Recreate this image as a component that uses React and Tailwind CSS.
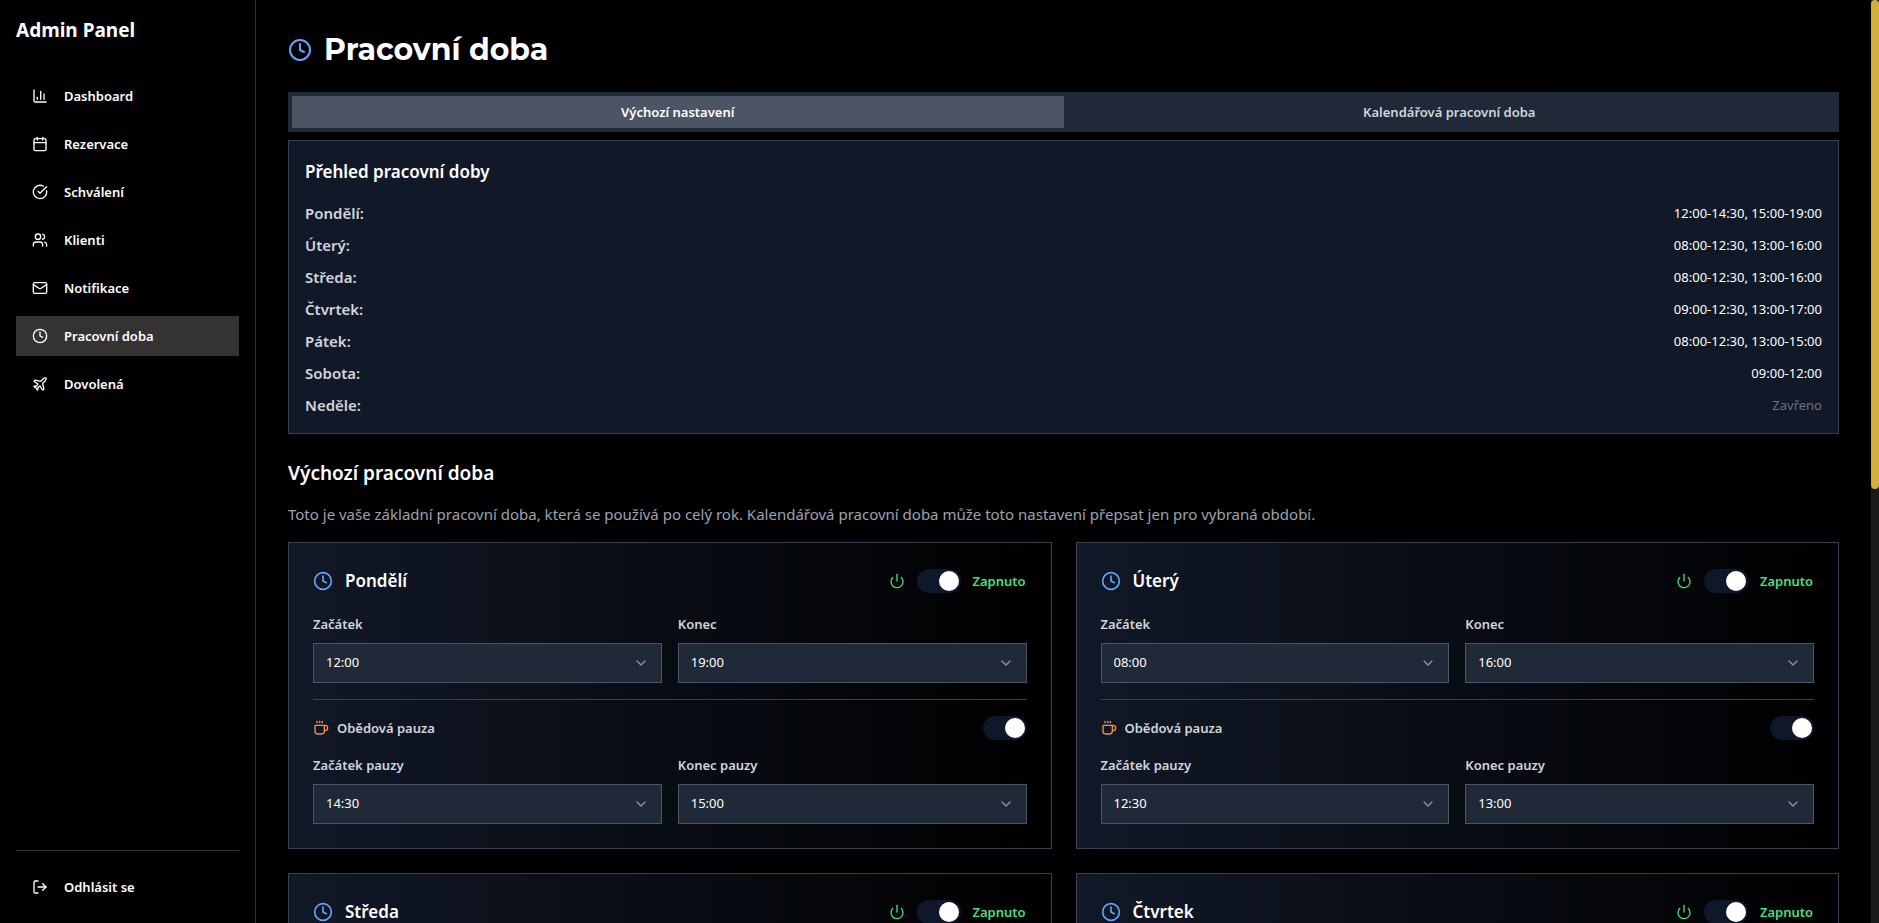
import React, { useId, useState } from 'react';
import {
  Calendar,
  ChartColumn,
  ChevronDown,
  CircleCheckBig,
  Clock,
  Coffee,
  LogOut,
  Mail,
  Plane,
  Power,
  Users,
} from 'lucide-react';

const NAV = [
  { label: 'Dashboard', icon: ChartColumn },
  { label: 'Rezervace', icon: Calendar },
  { label: 'Schválení', icon: CircleCheckBig },
  { label: 'Klienti', icon: Users },
  { label: 'Notifikace', icon: Mail },
  { label: 'Pracovní doba', icon: Clock, active: true },
  { label: 'Dovolená', icon: Plane },
];

const WEEK = [
  { day: 'Pondělí', start: '12:00', end: '19:00', pause: ['14:30', '15:00'] },
  { day: 'Úterý', start: '08:00', end: '16:00', pause: ['12:30', '13:00'] },
  { day: 'Středa', start: '08:00', end: '16:00', pause: ['12:30', '13:00'] },
  { day: 'Čtvrtek', start: '09:00', end: '17:00', pause: ['12:30', '13:00'] },
  { day: 'Pátek', start: '08:00', end: '15:00', pause: ['12:30', '13:00'] },
  { day: 'Sobota', start: '09:00', end: '12:00' },
  { day: 'Neděle' },
];

const TIMES = Array.from({ length: 48 }, (_, i) => {
  const hours = String(Math.floor(i / 2)).padStart(2, '0');
  return `${hours}:${i % 2 ? '30' : '00'}`;
});

function formatHours({ start, end, pause }) {
  if (!start) return null;
  return pause ? `${start}-${pause[0]}, ${pause[1]}-${end}` : `${start}-${end}`;
}

function Sidebar() {
  return (
    <aside className="sticky top-0 flex h-screen w-64 shrink-0 flex-col border-r border-[#333333] bg-black">
      <div className="px-4 pt-4 pb-5 text-[19px] leading-7 font-bold">Admin Panel</div>
      <nav aria-label="Administrace" className="flex flex-1 flex-col gap-2 px-4 pt-3">
        {NAV.map(({ label, icon: Icon, active }) => (
          <a
            key={label}
            href="#"
            aria-current={active ? 'page' : undefined}
            className={`flex h-10 items-center gap-4 px-4 text-[13px] leading-5 font-semibold ${active ? 'bg-[#333333]' : ''}`}
          >
            <Icon className="size-4" />
            {label}
          </a>
        ))}
      </nav>
      <div className="px-4 pb-4">
        <div className="border-t border-[#333333] pt-4">
          <button
            type="button"
            className="flex h-10 w-full items-center gap-4 px-4 text-[13px] leading-5 font-semibold"
          >
            <LogOut className="size-4" />
            Odhlásit se
          </button>
        </div>
      </div>
    </aside>
  );
}

function Toggle({ checked, onChange, label }) {
  return (
    <input
      type="checkbox"
      role="switch"
      aria-label={label}
      checked={checked}
      onChange={(e) => onChange(e.target.checked)}
      className="h-6 w-11 shrink-0 cursor-pointer appearance-none rounded-full bg-[#334155] p-0.5 before:block before:size-5 before:rounded-full before:bg-white checked:bg-[#0f172a] checked:before:translate-x-5"
    />
  );
}

function TimeSelect({ label, value }) {
  const id = useId();
  return (
    <div className="min-w-0 flex-1">
      <label htmlFor={id} className="mb-1.5 block text-[13px] leading-[26px] font-semibold text-gray-300">
        {label}
      </label>
      <div className="relative">
        <select
          id={id}
          defaultValue={value}
          className="block h-10 w-full appearance-none border border-[#4b5563] bg-[#1f2937] px-3 text-[13px] text-white"
        >
          {TIMES.map((t) => (
            <option key={t}>{t}</option>
          ))}
        </select>
        <ChevronDown className="pointer-events-none absolute top-3 right-[13px] size-4 text-[#8f949d]" />
      </div>
    </div>
  );
}

function DayCard({ day, start, end, pause }) {
  const [open, setOpen] = useState(Boolean(start));
  const [hasPause, setHasPause] = useState(Boolean(pause));
  return (
    <section className="border border-[#374151] bg-[linear-gradient(to_right,#111827,#000000)] p-6">
      <header className="flex h-7 items-center justify-between">
        <h3 className="flex items-center gap-3 text-[17px] leading-7 font-semibold">
          <Clock className="size-5 text-[#60a5fa]" />
          {day}
        </h3>
        <div className="flex items-center gap-3">
          <Power className={`size-4 ${open ? 'text-[#4ade80]' : 'text-gray-500'}`} />
          <Toggle checked={open} onChange={setOpen} label={`${day} – otevřeno`} />
          <span
            className={`min-w-[54px] text-[13px] leading-5 font-semibold ${open ? 'text-[#4ade80]' : 'text-gray-500'}`}
          >
            {open ? 'Zapnuto' : 'Vypnuto'}
          </span>
        </div>
      </header>
      {open && (
        <>
          <div className="mt-4 flex gap-4">
            <TimeSelect label="Začátek" value={start ?? '08:00'} />
            <TimeSelect label="Konec" value={end ?? '16:00'} />
          </div>
          <div className="mt-4 border-t border-[#374151] pt-4">
            <div className="flex h-6 items-center justify-between">
              <span className="flex items-center gap-2 text-[13px] leading-5 font-semibold text-gray-300">
                <Coffee className="size-4 text-[#fb923c]" />
                Obědová pauza
              </span>
              <Toggle checked={hasPause} onChange={setHasPause} label={`${day} – obědová pauza`} />
            </div>
            {hasPause && (
              <div className="mt-3 flex gap-4">
                <TimeSelect label="Začátek pauzy" value={pause?.[0] ?? '12:00'} />
                <TimeSelect label="Konec pauzy" value={pause?.[1] ?? '12:30'} />
              </div>
            )}
          </div>
        </>
      )}
    </section>
  );
}

function Overview() {
  return (
    <section className="mt-2 border border-[#374151] bg-[#111827] p-4">
      <h2 className="text-[17px] leading-[30px] font-semibold">Přehled pracovní doby</h2>
      <dl className="mt-3.5 flex flex-col gap-2">
        {WEEK.map((entry) => {
          const hours = formatHours(entry);
          return (
            <div key={entry.day} className="flex h-6 items-center justify-between">
              <dt className="text-[15px] leading-6 font-semibold text-gray-300">{entry.day}:</dt>
              <dd className={`text-[13px] leading-5 ${hours ? 'text-white' : 'text-[#6b7280]'}`}>
                {hours ?? 'Zavřeno'}
              </dd>
            </div>
          );
        })}
      </dl>
    </section>
  );
}

export default function App() {
  return (
    <div className="flex min-h-screen bg-black font-['Noto_Sans','Open_Sans',sans-serif] text-white">
      <Sidebar />
      <main className="min-w-0 flex-1 p-8">
        <h1 className="flex h-9 items-center gap-3 font-['Montserrat','Inter',sans-serif] text-[30px] leading-9 font-bold">
          <Clock className="size-6 text-[#60a5fa]" />
          Pracovní doba
        </h1>
        <div role="tablist" className="mt-6 grid grid-cols-2 bg-[#1f2937] p-1">
          <button
            type="button"
            role="tab"
            aria-selected="true"
            className="h-8 bg-[#4b5563] text-[13px] leading-5 font-semibold"
          >
            Výchozí nastavení
          </button>
          <button
            type="button"
            role="tab"
            aria-selected="false"
            className="h-8 text-[13px] leading-5 font-semibold text-gray-300"
          >
            Kalendářová pracovní doba
          </button>
        </div>
        <Overview />
        <h2 className="mt-6 text-[19px] leading-[30px] font-semibold">Výchozí pracovní doba</h2>
        <p className="mt-3.5 text-[15px] leading-6 text-[#9ca3af]">
          Toto je vaše základní pracovní doba, která se používá po celý rok. Kalendářová pracovní doba může toto
          nastavení přepsat jen pro vybraná období.
        </p>
        <div className="mt-4 grid grid-cols-2 items-start gap-6">
          {WEEK.map((entry) => (
            <DayCard key={entry.day} {...entry} />
          ))}
        </div>
      </main>
      <div aria-hidden="true" className="sticky top-0 h-screen w-2 shrink-0 bg-[#1a1a1a]">
        <div className="h-[53%] rounded-full bg-[#d4af37]" />
      </div>
    </div>
  );
}
